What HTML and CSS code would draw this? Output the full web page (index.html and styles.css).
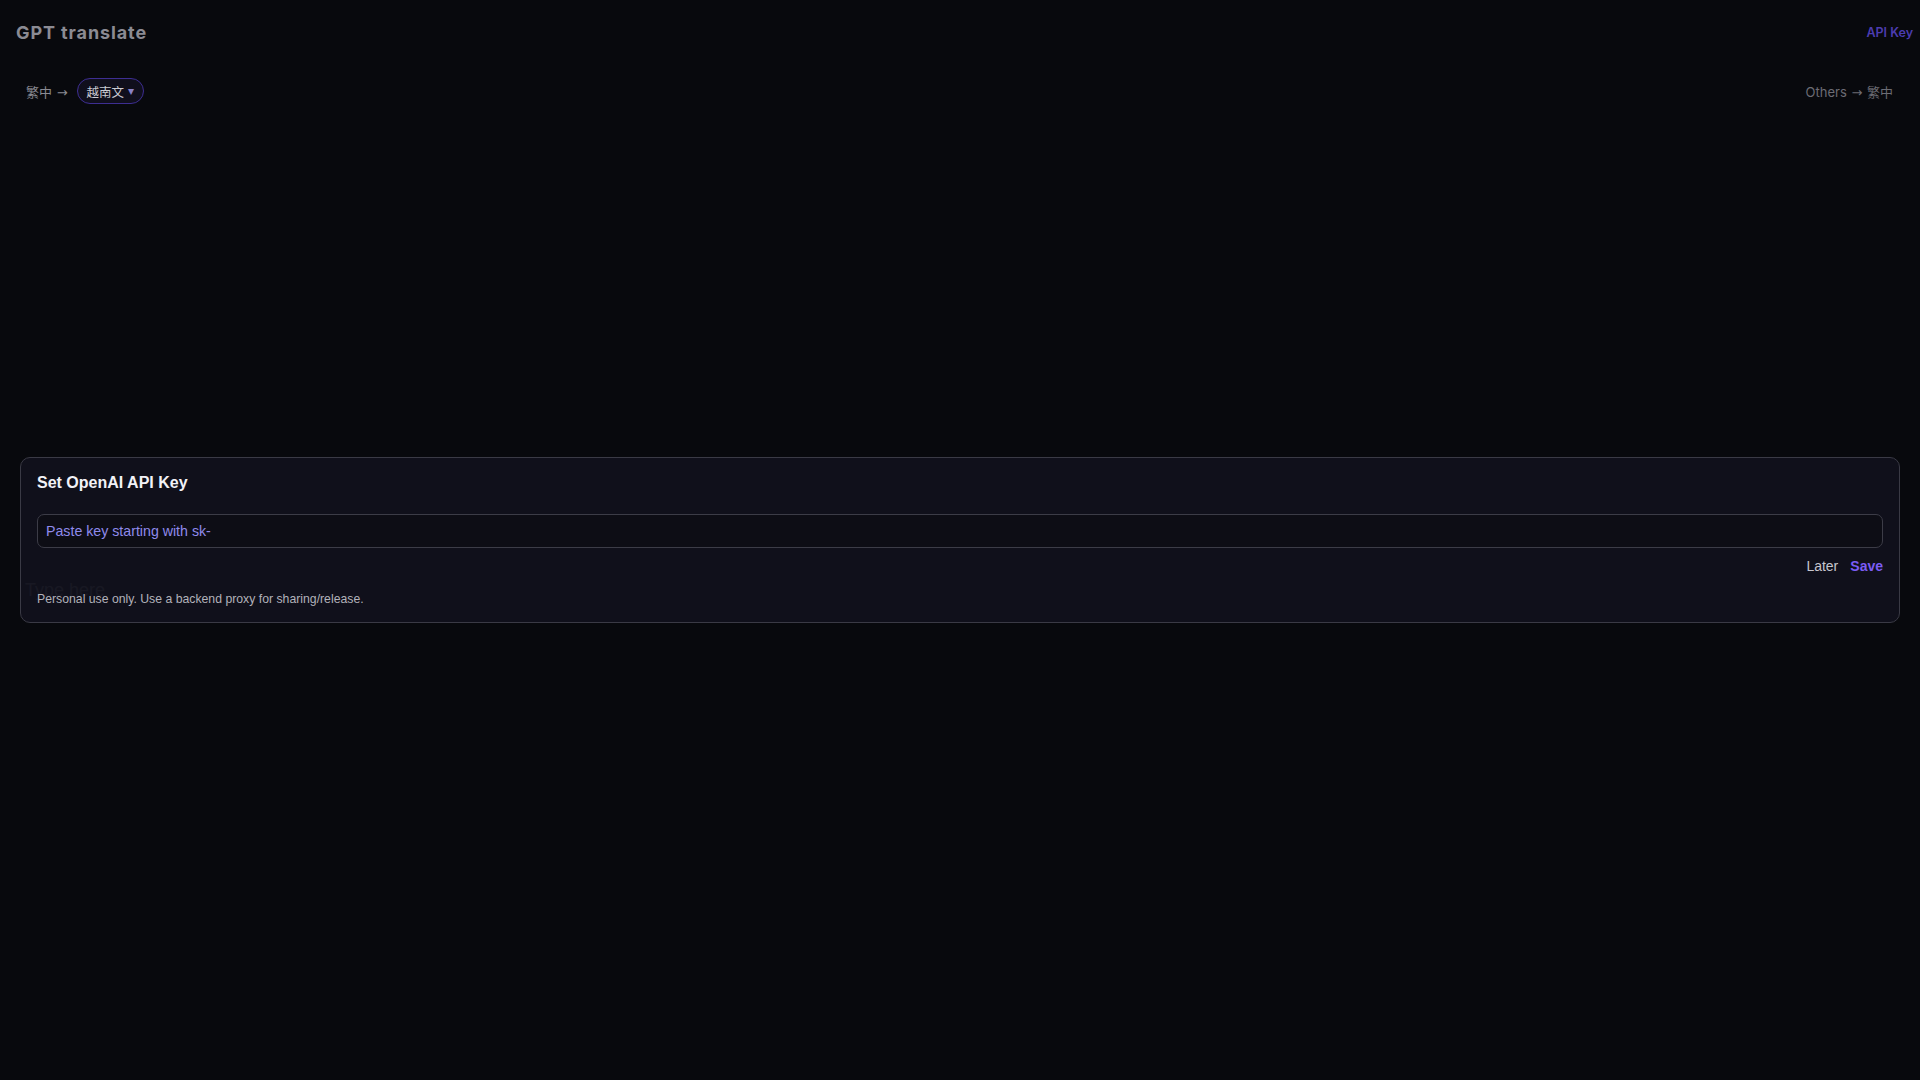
FILE: index.html
```html
<!DOCTYPE html>
<html lang="zh-Hant">
<head>
<meta charset="utf-8">
<title>GPT translate</title>
<link rel="stylesheet" href="styles.css">
</head>
<body>
<div class="app">
  <header class="topbar">
    <h1 class="brand">GPT translate</h1>
    <button class="api-link" type="button">API Key</button>
  </header>
  <div class="lang-row">
    <div class="lang-left">
      <span class="lang-label">繁中 <span class="arrow">→</span></span>
      <button class="lang-pill" type="button">越南文<span class="caret">▾</span></button>
    </div>
    <div class="lang-right">Others <span class="arrow">→</span> 繁中</div>
  </div>
  <main class="workspace">
    <textarea class="source" placeholder="Type here"></textarea>
  </main>

  <section class="key-card">
    <h2 class="card-title">Set OpenAI API Key</h2>
    <input class="key-input" type="text" placeholder="Paste key starting with sk-">
    <div class="card-actions">
      <button class="btn-later" type="button">Later</button>
      <button class="btn-save" type="button">Save</button>
    </div>
    <p class="card-note">Personal use only. Use a backend proxy for sharing/release.</p>
  </section>
</div>
</body>
</html>
```

FILE: styles.css
```css
html, body {
  margin: 0;
  padding: 0;
  height: 100%;
}
body {
  background: #08090d;
  font-family: "Inter", "Noto Sans CJK TC", sans-serif;
  color: #c8c8d0;
}
.app {
  position: relative;
  min-height: 100vh;
}
.topbar {
  height: 64px;
  display: flex;
  align-items: center;
  justify-content: space-between;
  padding: 0 7px 0 16px;
}
.brand {
  margin: 0;
  font-family: "Inter", sans-serif;
  font-size: 18px;
  font-weight: 700;
  letter-spacing: 0.9px;
  color: #8b8b93;
}
.api-link {
  background: none;
  border: 0;
  padding: 0;
  font-family: "Inter", sans-serif;
  font-size: 12.5px;
  font-weight: 600;
  color: #4c3cb0;
  cursor: pointer;
}
.lang-row {
  margin-top: 14px;
  height: 26px;
  display: flex;
  align-items: center;
  justify-content: space-between;
  padding: 0 27px 0 26px;
}
.lang-left {
  display: flex;
  align-items: center;
  gap: 8px;
}
.lang-label {
  font-family: "Inter", "Noto Sans CJK TC", sans-serif;
  font-size: 13px;
  color: #8a8a92;
}
.arrow {
  font-family: "DejaVu Sans", sans-serif;
  font-size: 13px;
  margin: 0 1px;
}
.lang-pill {
  height: 26px;
  box-sizing: border-box;
  padding: 0 9px 0 9px;
  border: 1px solid #3d2e92;
  border-radius: 13px;
  background: #100f1c;
  font-family: "Inter", "Noto Sans CJK TC", sans-serif;
  font-size: 12.5px;
  color: #cacad2;
  display: flex;
  align-items: center;
  gap: 4px;
}
.caret {
  font-family: "DejaVu Sans", sans-serif;
  font-size: 12px;
  color: #8a82c8;
}
.lang-right {
  font-family: "Inter", "Noto Sans CJK TC", sans-serif;
  font-size: 13px;
  color: #6c6c74;
}
.workspace {
  margin-top: 468px;
  padding: 0 17px;
}
.source {
  display: block;
  width: 100%;
  box-sizing: border-box;
  height: 200px;
  padding: 8px;
  border: 0;
  outline: none;
  resize: none;
  background: transparent;
  font-family: "Liberation Sans", sans-serif;
  font-size: 18px;
  color: #c8c8d0;
}
.source::placeholder {
  color: #6a6a78;
}
.key-card {
  position: absolute;
  top: 457px;
  left: 20px;
  right: 20px;
  box-sizing: border-box;
  padding: 16px 16px 16px;
  border: 1px solid #3a3a45;
  border-radius: 10px;
  background: rgba(17, 17, 28, 0.92);
  font-family: "Liberation Sans", sans-serif;
}
.card-title {
  margin: 0;
  font-size: 16px;
  font-weight: 700;
  line-height: 18px;
  color: #f2f2f7;
}
.key-input {
  display: block;
  margin-top: 22px;
  width: 100%;
  box-sizing: border-box;
  height: 34px;
  padding: 0 8px;
  border: 1px solid #3c3c47;
  border-radius: 7px;
  background: #0d0d15;
  font-family: "Liberation Sans", sans-serif;
  font-size: 14.2px;
  color: #e0e0e8;
  outline: none;
}
.key-input::placeholder {
  color: #8f8aec;
}
.card-actions {
  margin-top: 10px;
  display: flex;
  justify-content: flex-end;
  gap: 12px;
}
.btn-later, .btn-save {
  background: none;
  border: 0;
  padding: 0;
  font-family: "Liberation Sans", sans-serif;
  font-size: 14px;
  line-height: 16px;
  cursor: pointer;
}
.btn-later {
  color: #c6c6ce;
}
.btn-save {
  font-weight: 700;
  color: #7b5cf4;
}
.card-note {
  margin: 18px 0 0;
  font-size: 12.25px;
  line-height: 14px;
  color: #b2b2ba;
}
```
